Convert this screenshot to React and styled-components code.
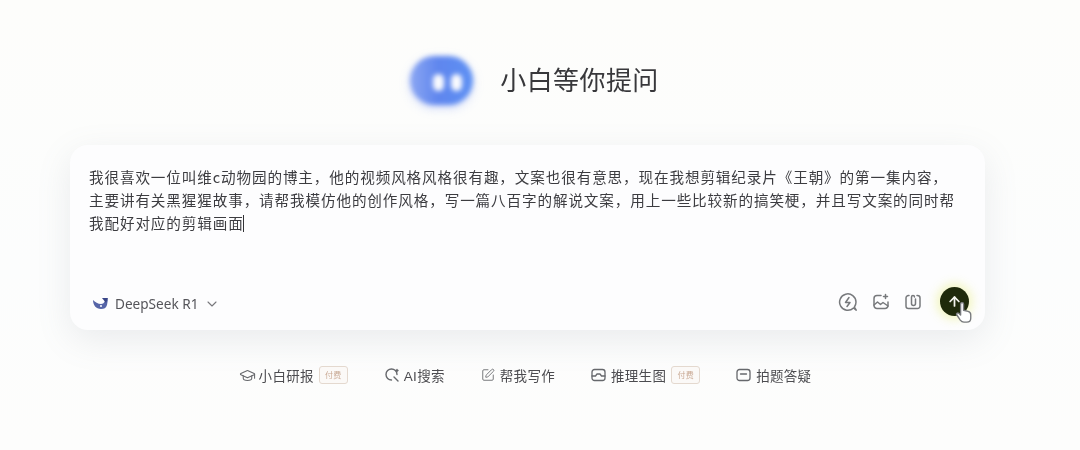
import React from 'react';
import styled, { createGlobalStyle } from 'styled-components';
import { ChevronDown, ArrowUp, GraduationCap, SquarePen } from 'lucide-react';

const GlobalStyle = createGlobalStyle`
  html, body { margin: 0; padding: 0; background: #fdfdfc; }
  body {
    font-family: "Noto Sans CJK SC", "Liberation Sans", sans-serif;
    color: #3a3a3c;
  }
`;

const Page = styled.div`
  width: 1080px;
  height: 450px;
  overflow: hidden;
  display: flex;
  flex-direction: column;
  align-items: center;
  padding-top: 55px;
  box-sizing: border-box;
  background: linear-gradient(180deg, #fdfdfb 0%, #fcfdfd 60%, #fdfdfc 100%);
  filter: blur(0.5px);
`;

const Hero = styled.div`
  display: flex;
  align-items: center;
  gap: 27px;
  height: 50px;
  margin-left: -11px;
`;

const Blob = styled.div`
  width: 63px;
  height: 49px;
  border-radius: 25px;
  background: linear-gradient(90deg, #8ba6f2 0%, #5f86ee 45%, #5d90f3 100%);
  filter: blur(2.5px);
  box-shadow: 0 3px 8px rgba(120, 150, 245, 0.35);
  display: flex;
  align-items: center;
  justify-content: center;
  gap: 7px;
  padding: 4px 0 0 11px;
  box-sizing: border-box;
`;

const Eye = styled.span`
  width: 11px;
  height: 17px;
  border-radius: 6px;
  background: #fafbfe;
`;

const Title = styled.h1`
  margin: -2px 0 0;
  font-size: 26px;
  font-weight: 400;
  line-height: 50px;
  color: #38383b;
  letter-spacing: 0.4px;
`;

const Card = styled.div`
  width: 915px;
  height: 185px;
  margin-top: 40px;
  margin-left: -25px;
  box-sizing: border-box;
  padding: 20px 19px 14px;
  background: #fdfdfe;
  border-radius: 18px;
  box-shadow: 0 10px 34px rgba(120, 125, 140, 0.14);
  display: flex;
  flex-direction: column;
  justify-content: space-between;
`;

const Prompt = styled.div`
  font-size: 14.6px;
  line-height: 23px;
  letter-spacing: 0.87px;
  color: #3c3c40;
`;

const PromptLine = styled.div`
  white-space: nowrap;
`;

const Caret = styled.span`
  display: inline-block;
  width: 1px;
  height: 17px;
  margin-left: -1px;
  vertical-align: -3px;
  background: #333336;
`;

const CardFooter = styled.div`
  display: flex;
  align-items: center;
  justify-content: space-between;
  padding-left: 3px;
`;

const ModelPicker = styled.div`
  display: flex;
  align-items: center;
  gap: 6px;
  padding-top: 4px;
  font-family: "Noto Sans", "Liberation Sans", sans-serif;
  font-size: 13.6px;
  color: #55555a;
  svg.chev { color: #77777c; }
`;

const Tools = styled.div`
  display: flex;
  align-items: center;
  gap: 14px;
  color: #77797c;
  margin-right: -3px;
`;

const SendWrap = styled.div`
  position: relative;
  margin-left: 4px;
`;

const Send = styled.button`
  width: 29px;
  height: 29px;
  padding: 0;
  border: 0;
  border-radius: 50%;
  background: #1f2a0b;
  color: #f4f4ee;
  display: flex;
  align-items: center;
  justify-content: center;
  box-shadow: 0 0 10px 4px rgba(232, 240, 130, 0.45);
`;

const Hand = styled.svg`
  position: absolute;
  left: 15px;
  top: 14px;
`;

const Chips = styled.div`
  display: flex;
  align-items: center;
  gap: 36px;
  margin-top: 34px;
  margin-left: -30px;
  height: 22px;
`;

const Chip = styled.div`
  display: flex;
  align-items: center;
  gap: 3px;
  font-size: 13.5px;
  letter-spacing: 0.3px;
  color: #4c4c50;
  svg { color: #66686c; flex: none; }
`;

const ChipLabel = styled.span`
  font-family: "Liberation Sans", "Noto Sans CJK SC", sans-serif;
  margin-left: ${p => p.$gap || 0}px;
`;

const Tag = styled.span`
  margin-left: 2px;
  width: 29px;
  height: 18px;
  border: 1px solid #e4d9cf;
  border-radius: 3px;
  box-sizing: border-box;
  font-size: 8px;
  line-height: 16px;
  text-align: center;
  color: #c9a994;
  background: #fbf9f7;
`;

const Whale = () => (
  <svg width="17" height="13" viewBox="0 0 17 13">
    <path d="M1 3c0 5 3 9 8 9 3 0 5-1 6-4l1-6-3 2c-1 2-2 3-4 3C6 7 3 5 1 3z" fill="#5665a8" />
    <path d="M10 1l6 0-2 5z" fill="#3a4688" />
    <circle cx="9" cy="9" r="1" fill="#fff" />
  </svg>
);

const BoltIcon = () => (
  <svg width="20" height="20" viewBox="0 0 20 20" fill="none" stroke="currentColor" strokeWidth="1.5" strokeLinecap="round" strokeLinejoin="round">
    <path d="M15.500 16A8.200 8.200 0 1 1 18 10c0 2-.6 3.700-1.600 5l1.800 3.200z" />
    <path d="M11 5.500L7.500 10.500h4.500L9 14.500" />
  </svg>
);

const PhotoIcon = () => (
  <svg width="18" height="18" viewBox="0 0 18 18" fill="none" stroke="currentColor" strokeWidth="1.5" strokeLinecap="round" strokeLinejoin="round">
    <path d="M9 2.500H5a3 3 0 0 0-3 3v7a3 3 0 0 0 3 3h8a3 3 0 0 0 3-3V9" />
    <path d="M2 12l3.500-3 3 2.500 2.500-2 5 3.500" />
    <path d="M13.500 1.500v4M11.500 3.500h4" />
  </svg>
);

const ClipIcon = () => (
  <svg width="18" height="18" viewBox="0 0 18 18" fill="none" stroke="currentColor" strokeWidth="1.5" strokeLinecap="round" strokeLinejoin="round">
    <path d="M5 2.500H4.500a2.500 2.500 0 0 0-2.500 2.500v8a2.500 2.500 0 0 0 2.500 2.500h9a2.500 2.500 0 0 0 2.500-2.500V5a2.500 2.500 0 0 0-2.500-2.500H13" />
    <path d="M11.500 6v4.500a2 2 0 0 1-4 0V4a1.500 1.500 0 0 1 3 0" />
  </svg>
);

const ScanSearch = () => (
  <svg width="16" height="16" viewBox="0 0 16 16" fill="none" stroke="currentColor" strokeWidth="1.400" strokeLinecap="round">
    <path d="M13 7.500A5.500 5.500 0 1 0 7.500 13" />
    <path d="M10 10l4 4M13 2.500v2M12 3.500h2" />
  </svg>
);

const PicIcon = () => (
  <svg width="15" height="14" viewBox="0 0 15 14" fill="none" stroke="currentColor" strokeWidth="1.300" strokeLinecap="round" strokeLinejoin="round">
    <rect x="1" y="1.500" width="13" height="11" rx="2.500" />
    <path d="M1 8h3.500l1.500-2h3l1.500 2H14" />
  </svg>
);

const AnswerIcon = () => (
  <svg width="15" height="14" viewBox="0 0 15 14" fill="none" stroke="currentColor" strokeWidth="1.300" strokeLinecap="round">
    <rect x="1" y="1.500" width="13" height="11" rx="2.500" />
    <path d="M4.500 6h6" />
  </svg>
);

const chips = [
  { icon: <GraduationCap size={17} strokeWidth={1.5} />, label: '小白研报', paid: true },
  { icon: <ScanSearch />, label: 'AI搜索', gap: 1 },
  { icon: <SquarePen size={14} strokeWidth={1.5} />, label: '帮我写作', gap: 2 },
  { icon: <PicIcon />, label: '推理生图', paid: true, gap: 2 },
  { icon: <AnswerIcon />, label: '拍题答疑', gap: 2 },
];

export default function App() {
  return (
    <>
      <GlobalStyle />
      <Page>
        <Hero>
          <Blob>
            <Eye />
            <Eye />
          </Blob>
          <Title>小白等你提问</Title>
        </Hero>
        <Card>
          <Prompt>
            <PromptLine>我很喜欢一位叫维c动物园的博主，他的视频风格风格很有趣，文案也很有意思，现在我想剪辑纪录片《王朝》的第一集内容，</PromptLine>
            <PromptLine>主要讲有关黑猩猩故事，请帮我模仿他的创作风格，写一篇八百字的解说文案，用上一些比较新的搞笑梗，并且写文案的同时帮</PromptLine>
            <PromptLine>我配好对应的剪辑画面<Caret /></PromptLine>
          </Prompt>
          <CardFooter>
            <ModelPicker>
              <Whale />
              DeepSeek R1
              <ChevronDown className="chev" size={16} strokeWidth={1.6} />
            </ModelPicker>
            <Tools>
              <BoltIcon />
              <PhotoIcon />
              <ClipIcon />
              <SendWrap>
                <Send aria-label="发送">
                  <ArrowUp size={15} strokeWidth={2.8} />
                </Send>
                <Hand width="18" height="23" viewBox="0 0 16 20">
                  <path d="M5 2.500a1.300 1.300 0 0 1 2.600 0V8l4 1c1.500.4 2.400 1.300 2.400 3v3c0 2-1.500 3.500-3.500 3.500H8c-1.500 0-2.500-.7-3.300-1.800L1.500 12c-.6-1 .8-2.200 1.800-1.300L5 12.200z" fill="#fff" stroke="#77797c" strokeWidth="1.200" strokeLinejoin="round" />
                </Hand>
              </SendWrap>
            </Tools>
          </CardFooter>
        </Card>
        <Chips>
          {chips.map(c => (
            <Chip key={c.label}>
              {c.icon}
              <ChipLabel $gap={c.gap}>{c.label}</ChipLabel>
              {c.paid && <Tag>付费</Tag>}
            </Chip>
          ))}
        </Chips>
      </Page>
    </>
  );
}
